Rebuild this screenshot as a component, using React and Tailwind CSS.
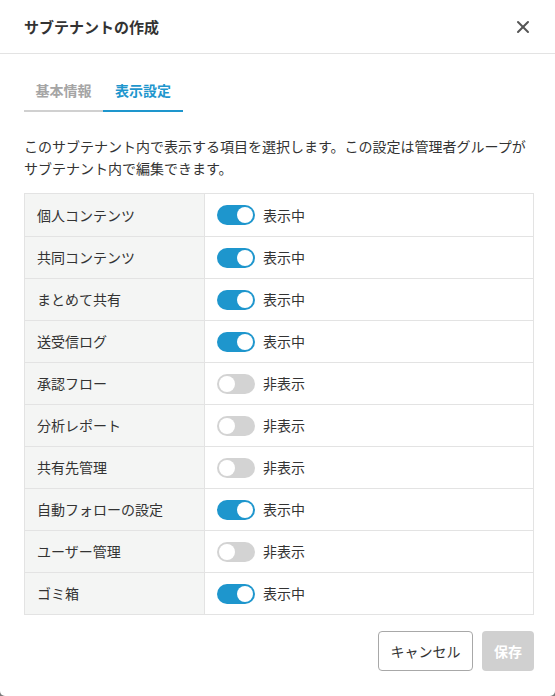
import React, { useState } from "react";
import { X } from "lucide-react";

const initialItems = [
  { label: "個人コンテンツ", on: true },
  { label: "共同コンテンツ", on: true },
  { label: "まとめて共有", on: true },
  { label: "送受信ログ", on: true },
  { label: "承認フロー", on: false },
  { label: "分析レポート", on: false },
  { label: "共有先管理", on: false },
  { label: "自動フォローの設定", on: true },
  { label: "ユーザー管理", on: false },
  { label: "ゴミ箱", on: true },
];

const Toggle = ({ on, onClick }) => (
  <button
    onClick={onClick}
    className={`relative h-[20px] w-[38px] rounded-full ${on ? "bg-[#1e96cd]" : "bg-[#d3d3d3]"}`}
  >
    <span
      className={`absolute top-[2px] h-[16px] w-[16px] rounded-full bg-white ${on ? "left-[20px]" : "left-[2px]"}`}
    />
  </button>
);

const App = () => {
  const [items, setItems] = useState(initialItems);
  const [tab, setTab] = useState(1);

  const flip = (i) => {
    setItems(items.map((it, idx) => (idx === i ? { ...it, on: !it.on } : it)));
  };

  return (
    <div
      className="h-[696px] w-[555px] bg-[#7a7a7a] text-[#333]"
      style={{ fontFamily: '"Noto Sans CJK JP", "Noto Sans", sans-serif' }}
    >
      <div className="flex h-full flex-col rounded-b-[5px] bg-white">
        <div className="flex h-[54px] items-center justify-between border-b border-[#e3e3e3] pl-[24px] pr-[22px]">
          <h1 className="text-[15px] font-bold leading-none">サブテナントの作成</h1>
          <X size={20} strokeWidth={2.4} className="text-[#555]" />
        </div>

        <div className="flex px-[24px] pt-[23px]">
          {["基本情報", "表示設定"].map((t, i) => (
            <button
              key={t}
              onClick={() => setTab(i)}
              className={`h-[35px] border-b-2 pb-[6px] text-[14px] font-bold ${
                tab === i ? "border-[#1e96cd] text-[#1e96cd]" : "border-[#d0d0d0] text-[#a5a5a5]"
              } ${i === 1 ? "w-[80px]" : "w-[79px]"}`}
            >
              {t}
            </button>
          ))}
        </div>

        <p className="px-[24px] pt-[23px] text-[14px] leading-[22px]">
          このサブテナント内で表示する項目を選択します。この設定は管理者グループがサブテナント内で編集できます。
        </p>

        <div className="ml-[24px] mr-[21px] mt-[14px] border border-[#e3e3e3] text-[14px]">
          {items.map((it, i) => (
            <div
              key={it.label}
              className={`flex h-[42px] ${i > 0 ? "border-t border-[#e3e3e3]" : ""}`}
            >
              <div className="flex w-[180px] items-center border-r border-[#e3e3e3] bg-[#f4f5f4] pl-[12px]">
                {it.label}
              </div>
              <div className="flex flex-1 items-center gap-[8px] pl-[12px]">
                <Toggle on={it.on} onClick={() => flip(i)} />
                <span>{it.on ? "表示中" : "非表示"}</span>
              </div>
            </div>
          ))}
        </div>

        <div className="flex justify-end gap-[9px] px-[21px] pt-[16px]">
          <button className="h-[40px] w-[95px] rounded-[4px] border border-[#a8a8a8] text-[14px]">
            キャンセル
          </button>
          <button className="h-[40px] w-[52px] rounded-[4px] bg-[#d0d0d0] text-[14px] font-bold text-white">
            保存
          </button>
        </div>
      </div>
    </div>
  );
};

export default App;
